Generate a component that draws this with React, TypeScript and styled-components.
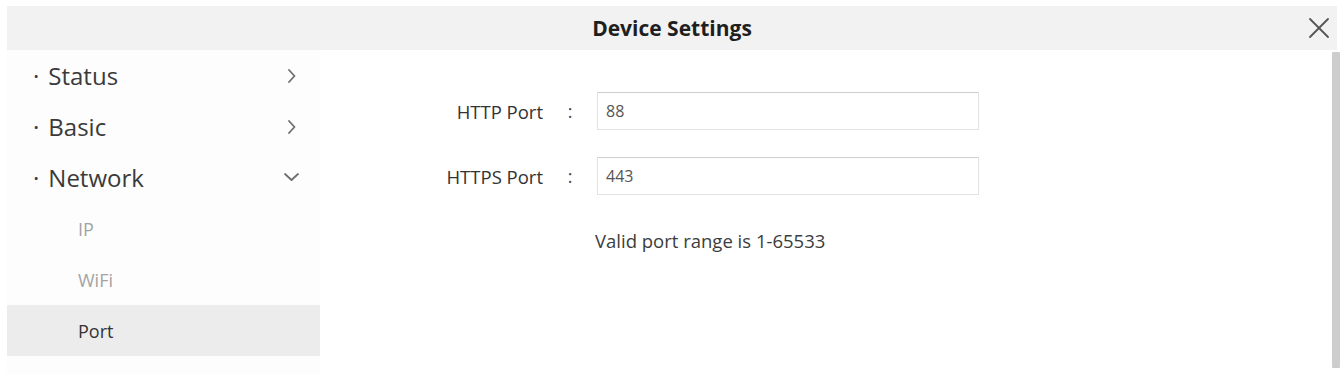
import React from 'react';
import styled, { createGlobalStyle } from 'styled-components';

const GlobalStyle = createGlobalStyle`
    html, body {
        margin: 0;
        padding: 0;
        background: #ffffff;
    }
    body {
        font-family: "Open Sans", "Liberation Sans", sans-serif;
        color: #333;
    }
`

const Page = styled.div`
    width: 1343px;
    height: 374px;
    box-sizing: border-box;
    padding: 6px 3px 0 7px;
    display: flex;
    flex-direction: column;
    overflow: hidden;
`

const Header = styled.div`
    height: 44px;
    margin-right: 3px;
    background: #f2f2f2;
    display: grid;
    grid-template-columns: 1fr auto 1fr;
    align-items: center;
`

const Title = styled.div`
    grid-column: 2;
    font-size: 21px;
    font-weight: 700;
    color: #1f1f1f;
`

const CloseButton = styled.button`
    grid-column: 3;
    justify-self: end;
    margin-right: 6px;
    width: 24px;
    height: 24px;
    padding: 0;
    border: none;
    background: transparent;
    display: flex;
    align-items: center;
    justify-content: center;
`

const Body = styled.div`
    flex: 1;
    display: flex;
`

const Sidebar = styled.nav`
    width: 313px;
    background: #fdfdfd;
    display: flex;
    flex-direction: column;
`

const MenuRow = styled.div`
    height: 51px;
    display: flex;
    align-items: center;
    justify-content: space-between;
    padding: 0 20px 0 26px;
    font-size: 24px;
    color: #3a3a3a;
`

const Bullet = styled.span`
    margin-right: 9px;
`

const SubRow = styled.div<{ $active?: boolean }>`
    height: 51px;
    display: flex;
    align-items: center;
    padding-left: 71px;
    font-size: 18px;
    color: ${p => (p.$active ? '#333' : '#a3a3a3')};
    background: ${p => (p.$active ? '#ececec' : 'transparent')};
`

const Content = styled.div`
    flex: 1;
    padding-top: 42px;
`

const Form = styled.div`
    display: grid;
    grid-template-columns: 223px 54px 382px;
    row-gap: 27px;
    align-items: center;
`

const Label = styled.label`
    text-align: right;
    font-size: 18.5px;
    color: #333;
`

const Colon = styled.span`
    text-align: center;
    font-size: 18px;
    color: #444;
`

const Input = styled.input`
    box-sizing: border-box;
    width: 382px;
    height: 38px;
    padding: 0 8px;
    border: 1px solid #e2e2e2;
    border-top-color: #cfcfcf;
    font-family: "Open Sans", "Liberation Sans", sans-serif;
    font-size: 16px;
    color: #555;
    outline: none;
`

const Hint = styled.div`
    grid-column: 3;
    margin-top: 6px;
    margin-left: -2px;
    font-size: 18.5px;
    color: #3c3c3c;
`

const Scrollbar = styled.div`
    width: 8px;
    margin-top: 2px;
    height: 316px;
    background: #cdcdcd;
    border-radius: 1px;
`

const Chevron: React.FC<{ open?: boolean }> = ({ open }) => (
    <svg width="18" height="14" viewBox="0 0 18 14" fill="none" stroke="#6e6e6e" strokeWidth="1.8" strokeLinecap="round" strokeLinejoin="round">
        {open ? <polyline points="3,3 9.5,9 16,3" /> : <polyline points="7,1 12.5,7 7,13" />}
    </svg>
)

const menu = [
    { name: 'Status', open: false },
    { name: 'Basic', open: false },
    { name: 'Network', open: true },
]

const subMenu = ['IP', 'WiFi', 'Port']

const ports = [
    { label: 'HTTP Port', value: '88' },
    { label: 'HTTPS Port', value: '443' },
]

const App: React.FC = () => {
    return (
        <Page>
            <GlobalStyle />
            <Header>
                <Title>Device Settings</Title>
                <CloseButton aria-label="close">
                    <svg width="22" height="22" viewBox="0 0 22 22" stroke="#555" strokeWidth="1.8" strokeLinecap="round">
                        <line x1="2" y1="2" x2="20" y2="20" />
                        <line x1="20" y1="2" x2="2" y2="20" />
                    </svg>
                </CloseButton>
            </Header>
            <Body>
                <Sidebar>
                    {menu.map(m => (
                        <MenuRow key={m.name}>
                            <span><Bullet>·</Bullet>{m.name}</span>
                            <Chevron open={m.open} />
                        </MenuRow>
                    ))}
                    {subMenu.map(s => (
                        <SubRow key={s} $active={s === 'Port'}>{s}</SubRow>
                    ))}
                </Sidebar>
                <Content>
                    <Form>
                        {ports.map(p => (
                            <React.Fragment key={p.label}>
                                <Label>{p.label}</Label>
                                <Colon>:</Colon>
                                <Input defaultValue={p.value} />
                            </React.Fragment>
                        ))}
                        <Hint>Valid port range is 1-65533</Hint>
                    </Form>
                </Content>
                <Scrollbar />
            </Body>
        </Page>
    )
}

export default App;
